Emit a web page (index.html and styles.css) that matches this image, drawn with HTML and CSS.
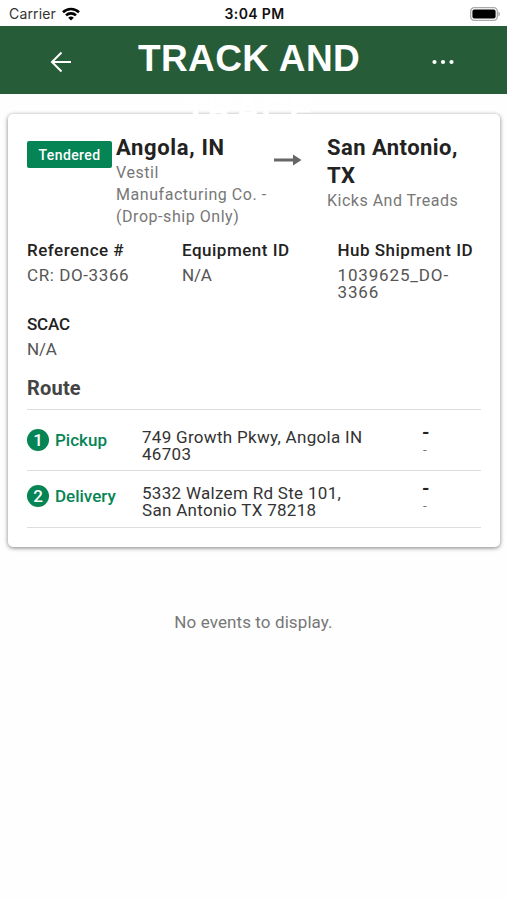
FILE: index.html
```html
<!DOCTYPE html>
<html lang="en">
<head>
<meta charset="utf-8">
<meta name="viewport" content="width=device-width, initial-scale=1">
<title>Track and Trace</title>
<link rel="stylesheet" href="styles.css">
</head>
<body>
<div class="status">
  <div class="carrier"><span>Carrier</span>
    <svg class="wifi" viewBox="0 0 18 14" width="18" height="14" fill="none" stroke="#000" stroke-width="2.6"><path d="M1 5.2A11.6 11.6 0 0 1 17 5.2M4 8.4A7.2 7.2 0 0 1 14 8.4"/><path d="M9 13.6L6.2 10.8A4 4 0 0 1 11.8 10.8Z" fill="#000" stroke="none"/></svg>
  </div>
  <div class="clock">3:04 PM</div>
  <svg class="battery" viewBox="0 0 30 14" width="30" height="14"><rect x=".7" y=".7" width="26.6" height="12.6" rx="3.6" fill="#fff" stroke="#aaa" stroke-width="1.3"/><rect x="2.4" y="2.4" width="23.2" height="9.2" rx="2" fill="#000"/><path d="M28.3 4.6Q30 5.2 30 7T28.3 9.4Z" fill="#aaa"/></svg>
</div>
<header class="bar">
  <svg class="back" viewBox="0 0 22 22" width="22" height="22" fill="none" stroke="#fff" stroke-width="2"><path d="M21 11H2M11.5 1.5L2 11L11.5 20.5"/></svg>
  <h1 class="title">TRACK AND<br>TRACE</h1>
  <svg class="more" viewBox="0 0 22 6" width="22" height="6" fill="#fff"><circle cx="2.5" cy="3" r="2.1"/><circle cx="11" cy="3" r="2.1"/><circle cx="19.5" cy="3" r="2.1"/></svg>
</header>
<main>
  <section class="card">
    <div class="summary">
      <span class="badge">Tendered</span>
      <div class="place origin"><h2>Angola, IN</h2><p>Vestil<br>Manufacturing Co. -<br>(Drop-ship Only)</p></div>
      <svg class="arrow" viewBox="0 0 28 12" width="28" height="12" fill="#666"><path d="M0 4.5H19V.5L27.5 6L19 11.5V7.5H0Z"/></svg>
      <div class="place"><h2>San Antonio,<br>TX</h2><p>Kicks And Treads</p></div>
    </div>
    <dl class="facts">
      <div><dt>Reference #</dt><dd>CR: DO-3366</dd></div>
      <div><dt>Equipment ID</dt><dd class="short">N/A</dd></div>
      <div><dt>Hub Shipment ID</dt><dd class="hub">1039625_DO-<br>3366</dd></div>
      <div><dt class="short">SCAC</dt><dd class="short">N/A</dd></div>
    </dl>
    <h3 class="route">Route</h3>
    <div class="stop">
      <span class="num">1</span><span class="kind">Pickup</span>
      <p class="address">749 Growth Pkwy, Angola IN<br>46703</p>
      <div class="time"><b>-</b><small>-</small></div>
    </div>
    <div class="stop second">
      <span class="num">2</span><span class="kind">Delivery</span>
      <p class="address">5332 Walzem Rd Ste 101,<br>San Antonio TX 78218</p>
      <div class="time"><b>-</b><small>-</small></div>
    </div>
  </section>
  <p class="empty">No events to display.</p>
</main>
</body>
</html>
```
FILE: styles.css
```css
* { box-sizing: border-box; }
body, h1, h2, h3, p, dl, dd { margin: 0; }
body { background: #fefefe; color: #222; font-family: Roboto, "Liberation Sans", sans-serif; }
.status { height: 26px; display: grid; grid-template-columns: 1fr auto 1fr; align-items: center; padding: 1px 7px 0 9px; background: #fff; font-family: Inter, sans-serif; font-size: 14px; }
.carrier { display: flex; align-items: center; gap: 6px; color: #333; letter-spacing: .15px; }
.clock { font-weight: 600; color: #111; letter-spacing: .35px; }
.battery { justify-self: end; }
.bar { height: 68px; background: #265c38; display: flex; align-items: center; }
.back { margin: 4px 0 0 50px; }
.title { position: relative; z-index: 1; width: 222px; height: 52px; margin: -2px 0 0 66px; font: bold 37px/52px "Liberation Sans", sans-serif; letter-spacing: .4px; text-align: center; color: #fff; white-space: nowrap; }
.more { margin: 4px 0 0 72px; }
.card { margin: 20px 7px 0 8px; height: 433px; padding: 20px 19px 0 19px; border-radius: 5px; background: #fff; box-shadow: 0 1px 4px rgba(0,0,0,.5); }
.summary { display: grid; grid-template-columns: 89px 158px 53px 1fr; height: 100px; align-items: start; }
.badge { width: 85px; height: 27px; margin-top: 7px; border-radius: 2px; background: #058456; color: #fff; font-size: 14px; line-height: 29px; font-weight: 500; letter-spacing: .4px; text-align: center; }
.place h2 { font-size: 22px; line-height: 28px; font-weight: 700; letter-spacing: .45px; white-space: nowrap; }
.place p { font-size: 16px; line-height: 22px; color: #777; letter-spacing: .5px; white-space: nowrap; }
.origin h2 { letter-spacing: .65px; }
.origin p { letter-spacing: .55px; }
.arrow { margin-top: 20px; }
.facts { display: grid; grid-template-columns: 155px 155.5px 1fr; grid-template-rows: 73.5px 61px; padding-top: 6px; }
.facts dt { font-size: 17px; line-height: 20px; font-weight: 500; letter-spacing: .5px; white-space: nowrap; }
.facts dd { margin-top: 7px; font-size: 17px; line-height: 17px; color: #555; letter-spacing: .6px; white-space: nowrap; }
.facts .short { letter-spacing: -.2px; }
.facts .hub { letter-spacing: .85px; }
.route { font-size: 20px; line-height: 26px; color: #444; letter-spacing: .2px; height: 34px; }
.stop { display: grid; grid-template-columns: 28px 87px 280px 1fr; height: 61px; border-top: 1px solid #ddd; padding-top: 19px; white-space: nowrap; }
.stop.second { height: 58px; padding-top: 14px; border-bottom: 1px solid #ddd; }
.num { width: 22px; height: 22px; border-radius: 50%; background: #058456; color: #fff; font-size: 17px; line-height: 22px; text-align: center; font-weight: 500; }
.kind { color: #058456; font-size: 17px; line-height: 22px; font-weight: 500; }
.address { font-size: 17px; line-height: 17px; color: #333; letter-spacing: .3px; }
.time { display: flex; flex-direction: column; line-height: 17px; margin-top: -5px; }
.time b { font-size: 19px; }
.time small { color: #777; padding-left: 1px; }
.empty { margin-top: 63px; text-align: center; font-size: 17px; line-height: 24px; color: #777; letter-spacing: .1px; }
```
